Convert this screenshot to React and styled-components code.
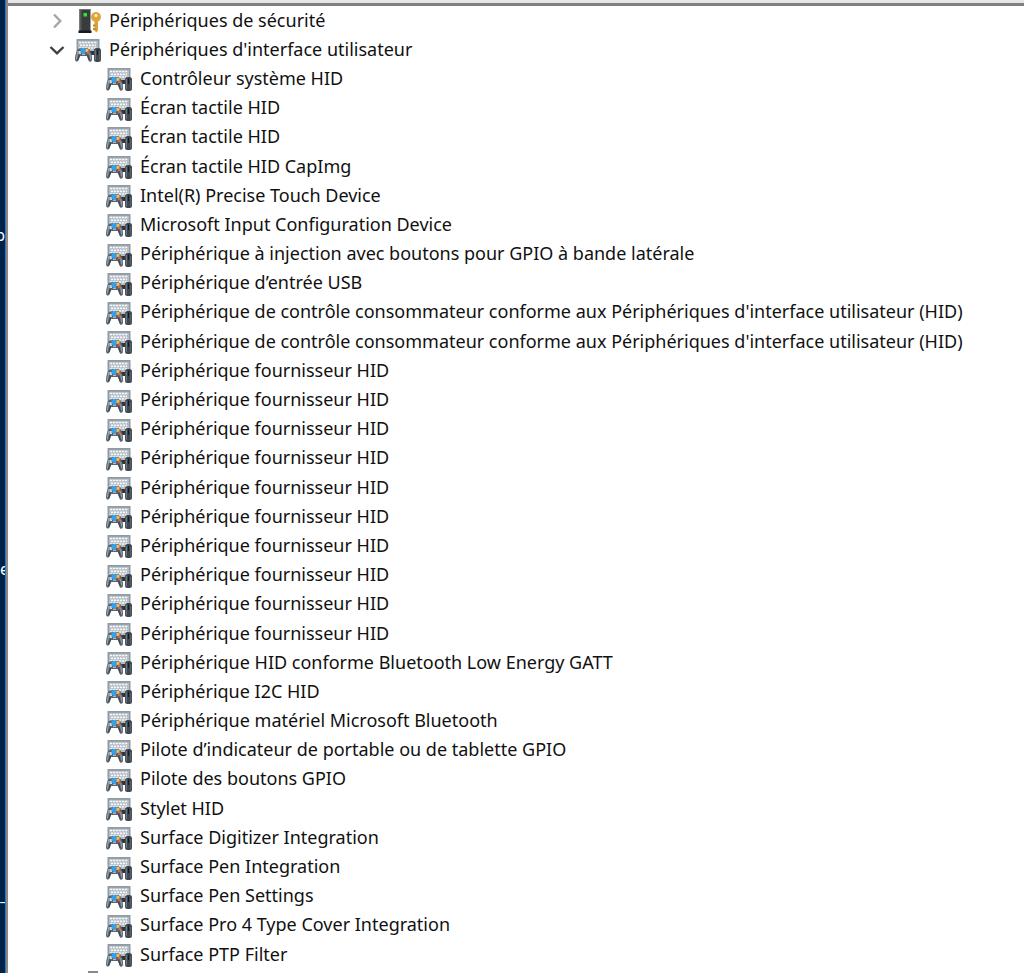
import React, { useState } from "react";
import styled, { createGlobalStyle } from "styled-components";

const GlobalStyle = createGlobalStyle`
  * {
    box-sizing: border-box;
  }

  body {
    margin: 0;
    background: #fff;
  }
`;

const Desktop = styled.div`
  position: relative;
  display: flex;
  min-height: 100vh;
  overflow: hidden;
  color: #111;
  font-family: "Noto Sans", "Open Sans", sans-serif;
  font-size: 18px;
  line-height: 26px;
`;

const Wallpaper = styled.div`
  flex: none;
  width: 6px;
  background: #00234a;
  border-right: 1px solid #2478c0;
`;

const DesktopLabel = styled.span`
  position: absolute;
  top: ${(props) => props.$top}px;
  left: 0;
  width: 5px;
  overflow: hidden;
  direction: ${(props) => (props.$end ? "rtl" : "ltr")};
  color: #fff;
  font-size: 16px;
  line-height: 20px;
`;

const Window = styled.main`
  display: flex;
  flex: 1;
  flex-direction: column;
  min-width: 0;
  border-left: 2px solid #8c8a89;
`;

const TopEdge = styled.div`
  flex: none;
  height: 6px;
  background: #e6e6e6;
  border-bottom: 3px solid #808080;
`;

const Tree = styled.ul`
  display: flex;
  flex: 1;
  flex-direction: column;
  margin: 0;
  padding: 0;
  list-style: none;
`;

const Row = styled.li`
  display: flex;
  flex: 1 1 29px;
  align-items: center;
  max-height: 30px;
  padding-left: ${(props) => (props.$child ? 98 : 40)}px;
  white-space: nowrap;
`;

const ClippedRow = styled.div`
  flex: none;
  height: 4px;
  padding: 1px 0 0 72px;
  overflow: hidden;
`;

const Toggle = styled.button`
  display: flex;
  align-items: center;
  justify-content: center;
  width: 18px;
  height: 18px;
  margin-right: 9px;
  padding: 0;
  border: 0;
  background: none;
`;

const IconBox = styled.svg`
  flex: none;
  width: 26px;
  height: 24px;
  margin: 1px 8px 0 0;
`;

const Chevron = ({ open }) => (
  <svg width="16" height="16" viewBox="0 0 16 16" fill="none">
    <path
      d={open ? "M1.500 5L8 11.300 14.500 5" : "M5 1.500L11.300 8 5 14.500"}
      stroke={open ? "#404040" : "#a6a6a6"}
      strokeWidth="2.4"
    />
  </svg>
);

const HidIcon = () => (
  <IconBox viewBox="0 0 26 24" aria-hidden="true">
    <path d="M1.500 1h23v13h-23z" fill="#8f9ba5" />
    <path d="M3 2.800h20V13H3z" fill="#b4bdc4" />
    <path
      d="M4 4.500h18M5 7.300h16M4 10h18"
      stroke="#f6f8f9"
      strokeWidth="1.700"
      strokeDasharray="2.200 .8"
    />
    <path d="M14 13h6v4h-6z" fill="#2f363d" />
    <path
      d="M2.500 11.500C4 10 6 10.200 8.500 10.500c2.500-.3 4.500-.5 6 1 1.800 2.500 2.700 7 2.500 10-.2 2.700-2.800 3-3.500.7L11.800 18H5.200l-1.700 4.200C2.700 24.300.1 23.800 0 21.500c0-3 .8-7.500 2.500-10z"
      fill="#59636d"
    />
    <path d="M2.800 13L1.300 21.500M14.600 15l1.200 6.500" stroke="#98a3ab" strokeWidth="1.200" />
    <path d="M4.500 17l-1.800 5M12.500 17l1.800 5" stroke="#3f4952" strokeWidth="1.200" />
    <path d="M3.500 13h2.500v3H3.500z" fill="#d2d8dc" />
    <path d="M5.500 10.500H10.500v4.500H5.500z" fill="#2ba2f5" />
    <path d="M10.500 11h3v3h-3z" fill="#efc255" />
    <path d="M12 13.500H14.500V16h-2.500z" fill="#e0603f" />
    <path d="M7 15.500h3V17H7z" fill="#aeb7be" />
    <rect x="19" y="10" width="7" height="14" rx="2.500" fill="#3f4850" />
    <path d="M20.300 12v10" stroke="#78838c" strokeWidth="1" />
    <path d="M22.500 11.500V17" stroke="#14191d" strokeWidth="1.200" />
    <path d="M24.800 13v9" stroke="#6a757e" strokeWidth=".8" />
  </IconBox>
);

const SecurityIcon = () => (
  <IconBox viewBox="0 0 26 24" aria-hidden="true">
    <path d="M4.500 0h11v22h-11z" fill="#393c3d" />
    <path d="M4.500 0h2v22h-2z" fill="#555a5b" />
    <path d="M4.500 0h11v1h-11z" fill="#707475" />
    <path d="M3.500 21.500h13V24h-13z" fill="#191b1c" />
    <path d="M8.500 4h3.500v3.500H8.500z" fill="#2ce82f" />
    <path d="M19.500 11h3.500v10.500L21.300 23.500l-1.800-2z" fill="#d9a136" />
    <path d="M18 15.500h2.500v2H18zM18 19h2.500v2H18z" fill="#c18a25" />
    <circle cx="21" cy="8" r="5" fill="#dda63c" />
    <circle cx="21" cy="6.500" r="1.500" fill="#fff4d8" />
  </IconBox>
);

const PrinterIcon = () => (
  <IconBox viewBox="0 0 26 24" aria-hidden="true">
    <path d="M8 0h10v8H8z" fill="#85898d" />
    <path d="M3 8h20v10H3z" fill="#5d6266" />
  </IconBox>
);

const Label = styled.span`
  padding-bottom: 2px;
`;

const consumerControl =
  "Périphérique de contrôle consommateur conforme aux Périphériques d'interface utilisateur (HID)";

const devices = [
  "Contrôleur système HID",
  "Écran tactile HID",
  "Écran tactile HID",
  "Écran tactile HID CapImg",
  "Intel(R) Precise Touch Device",
  "Microsoft Input Configuration Device",
  "Périphérique à injection avec boutons pour GPIO à bande latérale",
  "Périphérique d’entrée USB",
  consumerControl,
  consumerControl,
  ...Array(10).fill("Périphérique fournisseur HID"),
  "Périphérique HID conforme Bluetooth Low Energy GATT",
  "Périphérique I2C HID",
  "Périphérique matériel Microsoft Bluetooth",
  "Pilote d’indicateur de portable ou de tablette GPIO",
  "Pilote des boutons GPIO",
  "Stylet HID",
  "Surface Digitizer Integration",
  "Surface Pen Integration",
  "Surface Pen Settings",
  "Surface Pro 4 Type Cover Integration",
  "Surface PTP Filter",
];

const App = () => {
  const [open, setOpen] = useState(true);

  return (
    <Desktop>
      <GlobalStyle />
      <Wallpaper>
        <DesktopLabel $top={225} $end>
          p
        </DesktopLabel>
        <DesktopLabel $top={559}>e</DesktopLabel>
        <DesktopLabel $top={885}>_</DesktopLabel>
      </Wallpaper>
      <Window>
        <TopEdge />
        <Tree>
          <Row>
            <Toggle aria-label="Périphériques de sécurité">
              <Chevron />
            </Toggle>
            <SecurityIcon />
            <Label>Périphériques de sécurité</Label>
          </Row>
          <Row>
            <Toggle
              aria-label="Périphériques d'interface utilisateur"
              aria-expanded={open}
              onClick={() => setOpen(!open)}
            >
              <Chevron open={open} />
            </Toggle>
            <HidIcon />
            <Label>Périphériques d'interface utilisateur</Label>
          </Row>
          {open &&
            devices.map((name, index) => (
              <Row key={index} $child>
                <HidIcon />
                <Label>{name}</Label>
              </Row>
            ))}
        </Tree>
        <ClippedRow>
          <PrinterIcon />
        </ClippedRow>
      </Window>
    </Desktop>
  );
};

export default App;
